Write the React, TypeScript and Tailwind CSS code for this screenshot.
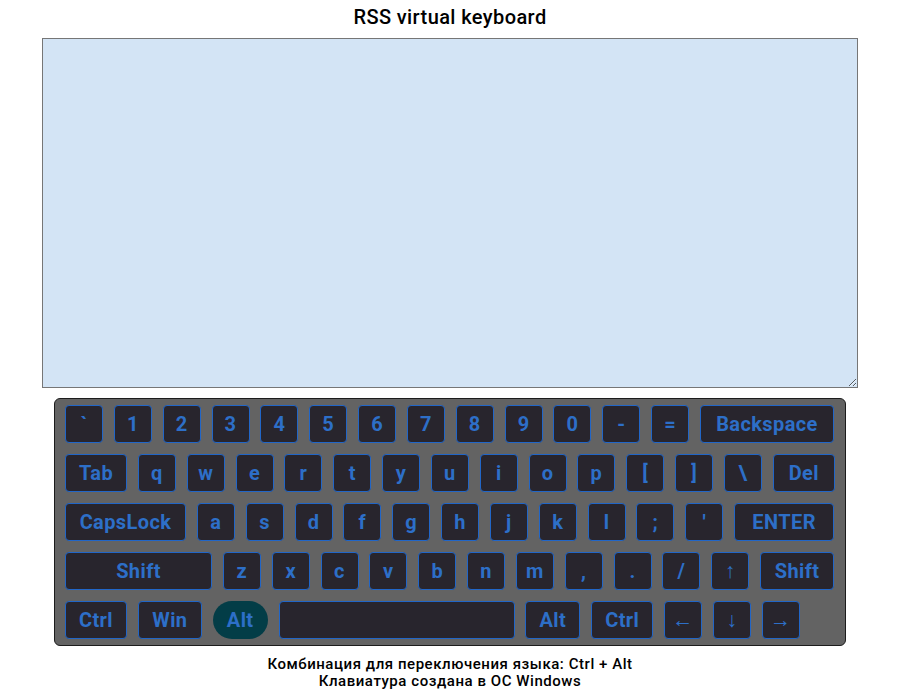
type Key = { label: string; w?: string; active?: boolean; arrow?: boolean };

const k = (label: string, w?: string): Key => ({ label, w });

const rows: Key[][] = [
  [..."`1234567890-=".split("").map((c) => k(c)), k("Backspace", "w-[134px]")],
  [
    k("Tab", "w-[62px]"),
    ..."qwertyuiop[]\\".split("").map((c) => k(c)),
    k("Del", "w-[62px]"),
  ],
  [
    k("CapsLock", "w-[121px]"),
    ..."asdfghjkl;'".split("").map((c) => k(c)),
    k("ENTER", "w-[100px]"),
  ],
  [
    k("Shift", "w-[147px]"),
    ..."zxcvbnm,./".split("").map((c) => k(c)),
    { label: "↑", arrow: true },
    k("Shift", "w-[74px]"),
  ],
  [
    k("Ctrl", "w-[62px]"),
    k("Win", "w-[64px]"),
    { label: "Alt", w: "w-[55px]", active: true },
    k("", "w-[236px]"),
    k("Alt", "w-[55px]"),
    k("Ctrl", "w-[62px]"),
    { label: "←", arrow: true },
    { label: "↓", arrow: true },
    { label: "→", arrow: true },
  ],
];

function KeyButton({ item }: { item: Key }) {
  const base =
    "h-[38px] shrink-0 flex items-center justify-center text-[#2d6fc8] font-bold text-[20px] leading-none tracking-[0.4px]";
  const look = item.active
    ? "bg-[#033d47] rounded-full"
    : "bg-[#28252d] border border-[#2166c8] rounded-[4px]";
  return (
    <div className={`${base} ${look} ${item.w ?? "w-[38px]"}`}>
      <span className={item.arrow ? "font-normal text-[21px]" : ""}>{item.label}</span>
    </div>
  );
}

export default function App() {
  return (
    <div className="w-[900px] h-[700px] bg-white flex flex-col items-center font-['Roboto',sans-serif]">
      <h1 className="mt-[5px] text-[20px] leading-[24px] font-medium text-black tracking-[0.4px]">
        RSS virtual keyboard
      </h1>
      <textarea
        className="mt-[9px] w-[816px] h-[350px] bg-[#d3e4f5] border border-[#767676] outline-none resize block"
        defaultValue=""
      />
      <div className="mt-[10px] w-[792px] bg-[#636363] border border-[#1c1c1c] rounded-[6px] px-[10px] pt-[6px] pb-[6px] flex flex-col gap-[11px]">
        {rows.map((row, i) => (
          <div key={i} className="flex gap-[10.85px]">
            {row.map((item, j) => (
              <KeyButton key={j} item={item} />
            ))}
          </div>
        ))}
      </div>
      <div className="mt-[10px] text-center text-[15px] leading-[17px] font-medium text-black tracking-[0.55px]">
        <p>Комбинация для переключения языка: Ctrl + Alt</p>
        <p>Клавиатура создана в ОС Windows</p>
      </div>
    </div>
  );
}
